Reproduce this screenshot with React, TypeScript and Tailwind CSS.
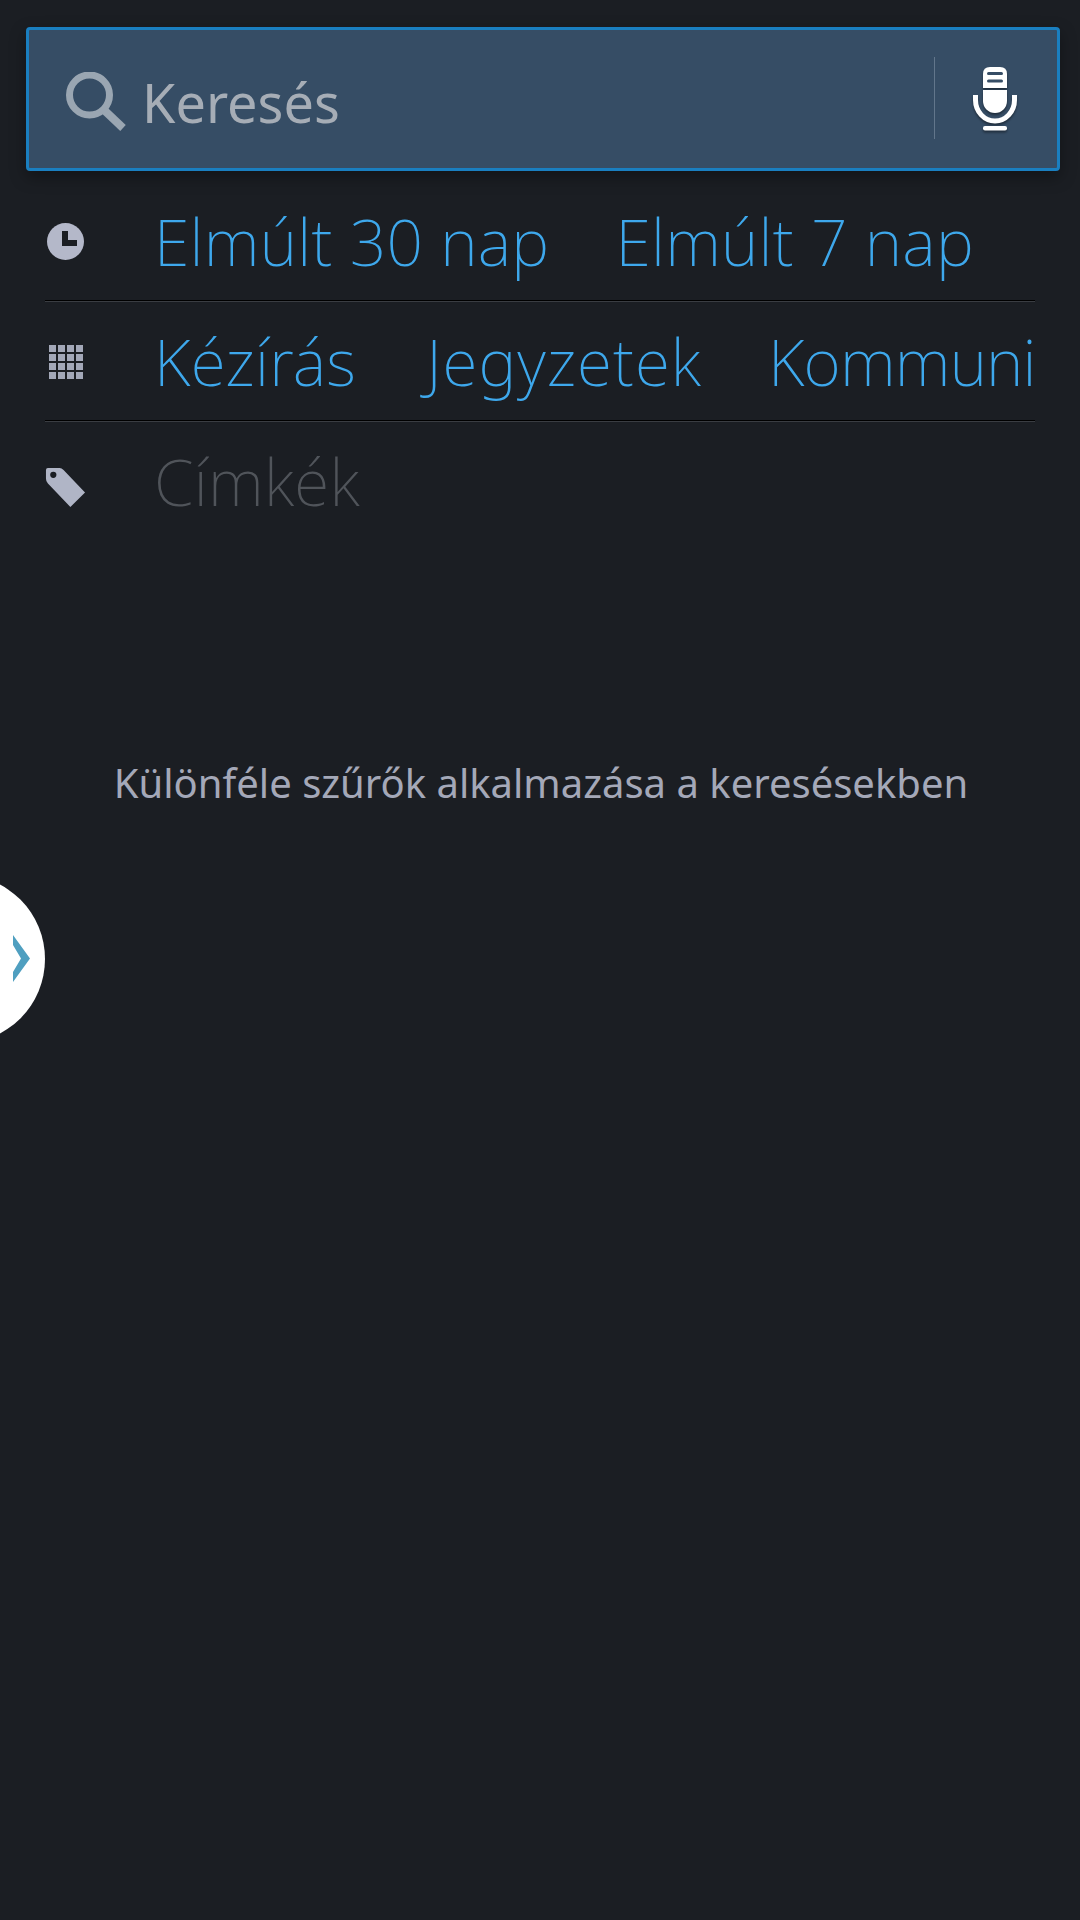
import React from 'react';

const FONT = "font-['Noto_Sans','Open_Sans',sans-serif]";

const SearchIcon = () => (
  <svg viewBox="0 0 60 60" className="w-[60px] h-[60px] shrink-0">
    <circle cx="23.5" cy="23" r="20" fill="none" stroke="#9aa6b2" strokeWidth="7" />
    <path d="M37 37 L57 56" fill="none" stroke="#9aa6b2" strokeWidth="8" />
  </svg>
);

const MicIcon = () => (
  <svg viewBox="0 0 44 64" className="w-[44px] h-[64px] drop-shadow-[0_2px_1px_rgba(0,0,0,0.4)]">
    <path d="M10 21 V7 Q10 0 17 0 H27 Q34 0 34 7 V21 Z" fill="#fff" />
    <rect x="14" y="5" width="16" height="3" rx="1.5" fill="#364d65" />
    <rect x="14" y="12.5" width="16" height="3" rx="1.5" fill="#364d65" />
    <path d="M10 23 H34 V34 A12 12 0 0 1 10 34 Z" fill="#fff" />
    <path d="M2.5 28 V33 A19.5 21 0 0 0 41.5 33 V28" fill="none" stroke="#fff" strokeWidth="5" />
    <rect x="10" y="59" width="24" height="4.5" rx="2" fill="#fff" />
  </svg>
);

const ClockIcon = () => (
  <svg viewBox="0 0 37 37" className="w-[37px] h-[37px] ml-[2px]">
    <circle cx="18.5" cy="18.5" r="18.5" fill="#b4b8c9" />
    <path d="M15 8 H21 V17 H30 V23 H15 Z" fill="#1b1e23" />
  </svg>
);

const GridIcon = () => (
  <div className="grid grid-cols-4 gap-[2px] w-[34px] ml-[4px]">
    {Array.from({ length: 16 }).map((_, i) => (
      <div key={i} className="w-[7px] h-[7px] bg-[#a3a8b8]" />
    ))}
  </div>
);

const TagIcon = () => (
  <svg viewBox="0 0 42 42" className="w-[41px] h-[41px] mt-[10px]">
    <path d="M3 1 L15 1 Q17 1 19 3 L41 26 L26 41 L3 17 Q1 15 1 12 L1 3 Q1 1 3 1 Z" fill="#b0b5c6" />
    <circle cx="8.5" cy="8" r="3.2" fill="#1b1e23" />
  </svg>
);

const FilterRow = ({ icon, border, children }: { icon: React.ReactNode; border?: boolean; children: React.ReactNode }) => (
  <div className={`flex items-center h-[120px] mx-[45px] overflow-hidden ${border ? 'border-b border-b-[#3a3d42] shadow-[inset_0_-1px_0_#000]' : ''}`}>
    <div className="w-[109px] shrink-0 flex items-center">{icon}</div>
    <div className="flex items-center gap-[66px] whitespace-nowrap text-[64px] font-extralight tracking-[0.3px] leading-none">{children}</div>
  </div>
);

export default function App() {
  return (
    <div className={`relative w-[1080px] h-[1920px] overflow-hidden bg-[#1b1e23] ${FONT}`}>
      <div className="pt-[27px] pl-[26px] pr-[20px]">
        <div className="flex items-center h-[144px] pl-[37px] pr-[40px] bg-[#364d65] border-[3px] border-[#1a7fc0] rounded-[4px] shadow-[0_6px_16px_rgba(0,0,0,0.35)]">
          <div className="flex items-center pt-[5px]">
            <SearchIcon />
            <span className="ml-[16px] text-[54px] leading-none text-[#a6adb6]">Keresés</span>
          </div>
          <div className="ml-auto mb-[3px] w-px h-[82px] bg-[#62768b]" />
          <div className="ml-[38px] flex items-center justify-center">
            <MicIcon />
          </div>
        </div>
      </div>

      <div className="mt-[11px]">
        <FilterRow icon={<ClockIcon />} border>
          <span className="text-[#3ea8ec]">Elmúlt 30 nap</span>
          <span className="text-[#3ea8ec]">Elmúlt 7 nap</span>
        </FilterRow>
        <FilterRow icon={<GridIcon />} border>
          <span className="text-[#3ea8ec]">Kézírás</span>
          <span className="ml-[4px] tracking-[1px] text-[#3ea8ec]">Jegyzetek</span>
          <span className="tracking-[-0.8px] text-[#3ea8ec]">Kommunikáció</span>
        </FilterRow>
        <FilterRow icon={<TagIcon />}>
          <span className="text-[#50545a]">Címkék</span>
        </FilterRow>
      </div>

      <p className="mt-[221px] pl-[2px] text-center text-[40px] leading-none text-[#a4a8b8]">
        Különféle szűrők alkalmazása a keresésekben
      </p>

      <div className="absolute left-[-123px] top-[875px] w-[168px] h-[168px] rounded-full bg-white" />
      <svg viewBox="0 0 17 47" className="absolute left-[13px] top-[935px] w-[17px] h-[47px]">
        <path d="M0 0 L17 23.5 L0 47 V37 L8 23.5 L0 10 Z" fill="#4f9fc0" />
      </svg>
    </div>
  );
}
